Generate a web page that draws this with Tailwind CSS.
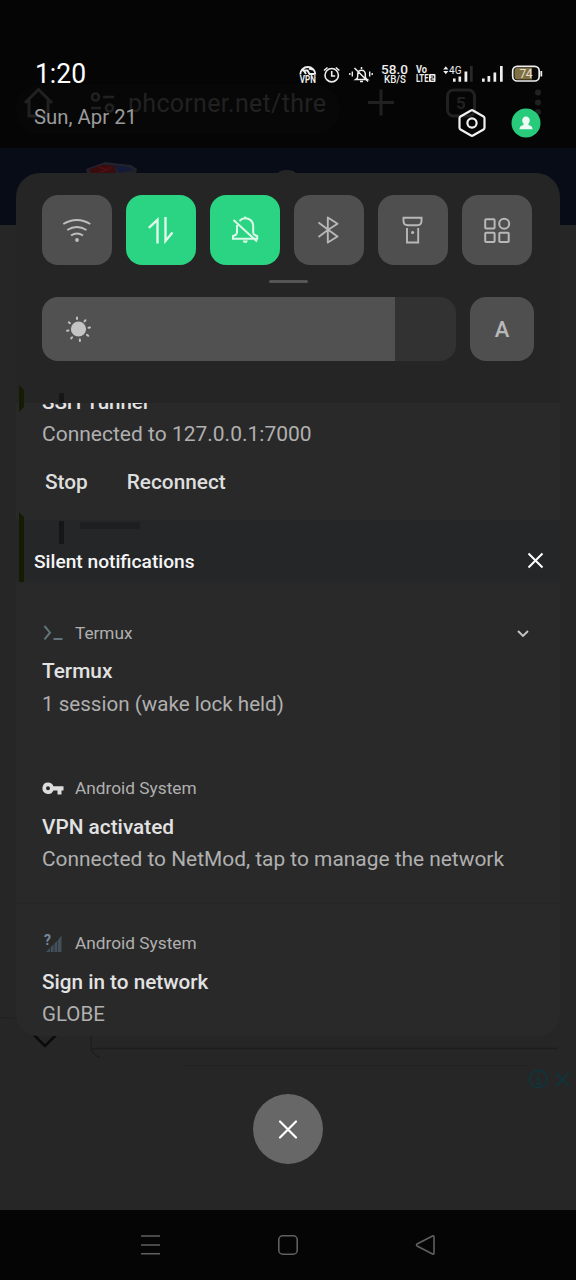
<!DOCTYPE html>
<html lang="en">
<head>
<meta charset="utf-8">
<title>Notification shade</title>
<script src="https://cdn.jsdelivr.net/npm/@tailwindcss/browser@4"></script>
</head>
<body class="bg-black">
<div class="relative w-[576px] h-[1280px] overflow-hidden bg-[#262626] font-['Roboto',sans-serif] text-[#b0b0b0]">

  <!-- dimmed browser page behind the shade -->
  <svg class="absolute inset-0" width="576" height="1280" viewBox="0 0 576 1280" fill="none" aria-hidden="true">
    <rect width="576" height="148" fill="#050505"/>
    <rect y="148" width="576" height="77" fill="#070c16"/>
    <rect x="16" y="84" width="324" height="51" rx="25" fill="#070707"/>
    <path d="M25 103 38.500 89.500 52 103M29 100v16h19v-16" stroke="#212121" stroke-width="3"/>
    <g stroke="#212121" stroke-width="2.600"><circle cx="95.500" cy="97" r="3.500"/><path d="M103 97h11M91 108h10"/><circle cx="109.500" cy="108" r="3.500"/></g>
    <text x="128" y="112" font-size="25" fill="#212121" textLength="198">phcorner.net/thre</text>
    <path d="M368 102.500h26M381 89.500v26" stroke="#212121" stroke-width="3"/>
    <rect x="447.500" y="90" width="27" height="26" rx="6" stroke="#212121" stroke-width="3"/>
    <text x="461" y="109" font-size="17" font-weight="700" text-anchor="middle" fill="#212121">5</text>
    <g fill="#212121"><circle cx="538" cy="92.500" r="3"/><circle cx="538" cy="102.500" r="3"/><circle cx="538" cy="112" r="3"/></g>
    <path d="M86 169l19-7 26 3 6 4-1 5H87z" fill="#22222a"/>
    <path d="M89 169.500l15-5 10 1.500 2 7H91z" fill="#3a0c0e"/><path d="M114 165.500l15 1.500 4 3-14 3z" fill="#151b36"/><path d="M98 167l10 3 3-3M100 172l8-2" stroke="#501014" stroke-width="1.500"/>
    <path d="M278 173q2-3 9-3t9 3z" fill="#252525"/>
    <path d="M0 1018h14q9 0 12 10" stroke="#1e1e1e"/>
    <path d="M34 1035l11 11 11-11" stroke="#0b0b0b" stroke-width="2.500"/>
    <path d="M91 1036v11q1 9 9 10M91 1048.500h466" stroke="#1d1d1d" stroke-width="1.300"/>
    <path d="M184 1065.500h344" stroke="#222"/>
    <g stroke="#0f353b" stroke-width="1.800"><circle cx="538.300" cy="1079" r="8.700"/><path d="M556 1073l13 13M569 1073l-13 13"/><path d="M538.500 1078v6M536 1078.500h3M536 1084h5" /><path d="M537.500 1074h2" stroke-width="2"/></g>
  </svg>

  <div class="relative flex flex-col h-full">
    <!-- status bar and date -->
    <header class="h-[173px] shrink-0 pt-[60px] pl-[34px] pr-[33px]">
      <div class="flex items-center justify-between h-[28px]">
        <span class="pl-px"><svg width="56" height="36" viewBox="0 0 56 36" class="block" aria-label="1:20"><text x="0" y="27" font-size="27" fill="#fff" textLength="51" lengthAdjust="spacingAndGlyphs">1:20</text></svg></span>
        <svg width="246" height="26" viewBox="297 61 246 26" fill="none" stroke="#eee" stroke-width="1.600" class="shrink-0">
          <path d="M300.300 74.500a7.500 7.500 0 0 1 15 0M302.500 70.500h5l2 3.500h5M306 74l-2-3M309 68.500l4 1" stroke-width="1.900"/>
          <text x="307.800" y="82.700" font-size="10" font-weight="700" fill="#eee" stroke="none" text-anchor="middle" textLength="16" lengthAdjust="spacingAndGlyphs">VPN</text>
          <circle cx="331.700" cy="75.200" r="6.700"/><path d="M331.700 71v5h3.500M324 70.500l3.500-3M335.800 67.500l3.500 3"/>
          <path d="M356 79.500q1.700-1 1.700-3v-2.500a3.800 3.800 0 0 1 7.600 0v2.500q0 2 1.700 3zM354.500 68l13.500 13.500M361.500 69v-2M360 81.500h3" stroke-width="1.500"/>
          <path d="M352.300 71.500v5M349.800 73v2M369.700 71.500v5M372.200 73v2" stroke-width="1.400"/>
          <g fill="#eee" stroke="none" font-weight="700">
            <text x="381" y="73.500" font-size="13" font-weight="500" textLength="27" lengthAdjust="spacingAndGlyphs">58.0</text>
            <text x="384" y="83.300" font-size="10.500" font-weight="500" textLength="22" lengthAdjust="spacingAndGlyphs">KB/S</text>
            <text x="416" y="73" font-size="10" textLength="11" lengthAdjust="spacingAndGlyphs">Vo</text>
            <text x="416" y="82" font-size="10.500" textLength="12.500" lengthAdjust="spacingAndGlyphs">LTE</text>
            <rect x="429" y="74" width="6.500" height="8" rx="1"/>
            <path d="M430.800 76h2.800v2h-2.500v2.200h2.800" fill="none" stroke="#111" stroke-width=".9"/>
            <path d="M443.200 69.500l2.600-3.200 2.600 3.200zM443.200 71l2.600 3.200 2.600-3.200z"/>
            <text x="449" y="73.500" font-size="11" font-weight="400" textLength="12.500" lengthAdjust="spacingAndGlyphs">4G</text>
            <path d="M453 78.500h2.600v3.200H453zM458.500 76.500h2.600v5.200h-2.600zM464.500 71.500h2.800v10.200h-2.800zM482 78.500h2.700v3.200H482zM487.500 76h2.700v5.700h-2.700zM493.500 72.500h2.700v9.200h-2.700zM500 66h2.700v15.700H500z"/>
            <path d="M470 66h2.700v15.700H470z" fill="#292929"/>
          </g>
          <rect x="512.700" y="66.300" width="26.500" height="14.700" rx="4.500" fill="#090909" stroke-width="1.700"/>
          <path d="M517.500 67.800h14.500v11.800h-14.500q-3 0-3-3v-5.800q0-3 3-3z" fill="#7f7142" stroke="none"/>
          <path d="M541.300 71v5.500" stroke-width="1.800"/>
          <text x="526" y="78" font-size="12" fill="#e4dfd0" stroke="none" text-anchor="middle" textLength="13">74</text>
        </svg>
      </div>
      <div class="flex justify-between pt-[17px]">
        <svg width="106" height="28" class="block"><text x="0" y="18.700" font-size="20.500" fill="#9b9b9b" textLength="103" lengthAdjust="spacingAndGlyphs">Sun, Apr 21</text></svg>
        <div class="flex gap-[24px] pt-[3px] pr-[2px]">
          <svg width="30" height="30" viewBox="0 0 30 30" fill="none" stroke="#f2f2f2" stroke-width="2.200"><path d="M14 2.500q1-.6 2 0l10.500 6q1 .6 1 1.800v9.400q0 1.200-1 1.800l-10.500 6q-1 .6-2 0l-10.500-6q-1-.6-1-1.800v-9.400q0-1.200 1-1.800z"/><circle cx="15" cy="15" r="4.600"/></svg>
          <svg width="30" height="30" viewBox="0 0 30 30"><circle cx="15" cy="15" r="14.500" fill="#27cb7b"/><path d="M15 8.500a3.800 3.800 0 0 1 3.700 4.700q-.4 2-1.500 2.800.2 1 1.600 1.500 2.700.8 2.700 3.800h-13q0-3 2.700-3.800 1.400-.5 1.600-1.500-1.100-.8-1.500-2.800A3.800 3.800 0 0 1 15 8.500z" fill="#eefaf4"/></svg>
        </div>
      </div>
    </header>

    <!-- quick settings -->
    <section class="h-[230px] shrink-0 mx-4 px-[26px] pt-[22px] rounded-t-[24px] bg-[#252525]">
      <div class="flex gap-[14px]">
        <div class="size-[70px] rounded-[16px] bg-[#4f4f4f] grid place-items-center"><svg width="30" height="30" viewBox="0 0 30 30" fill="none" stroke="#bebebe" stroke-width="1.900"><path d="M1.300 9q13.500-8 27 0M5.200 15q9.700-6 19.300 0M9 20.500q6-4 12 0"/><circle cx="15" cy="25" r="1.900" fill="#bebebe" stroke="none"/></svg></div>
        <div class="size-[70px] rounded-[16px] bg-[#2ad482] grid place-items-center"><svg width="30" height="30" viewBox="0 0 30 30" fill="none" stroke="#dcf9e9" stroke-width="2.400"><path d="M2.800 12.800l8.700-8V28.500M26.500 17.500L19.500 26V2"/></svg></div>
        <div class="size-[70px] rounded-[16px] bg-[#2ad482] grid place-items-center"><svg width="30" height="30" viewBox="0 0 30 30" fill="none" stroke="#dcf9e9" stroke-width="2"><path d="M9.500 6A7.800 7.800 0 0 1 23.200 11v6.500q0 2.500 4 3.500v2.800H3V21q4-1 4-3.500V10M3.500 5l23.500 21.500"/><path d="M15.200 1.500v2"/><path d="M12.700 25.500h5.200q-.5 2.500-2.600 2.500t-2.600-2.500z" fill="#dcf9e9" stroke="none"/></svg></div>
        <div class="size-[70px] rounded-[16px] bg-[#4f4f4f] grid place-items-center"><svg width="30" height="30" viewBox="0 0 30 30" fill="none" stroke="#b8b8b8" stroke-width="1.900" stroke-linejoin="round"><path d="M4.500 7.500l9.300 7 9.700 7-9.700 6V2.500l9.700 6.200-9.700 6.300-9.300 7"/></svg></div>
        <div class="size-[70px] rounded-[16px] bg-[#4f4f4f] grid place-items-center"><svg width="30" height="30" viewBox="0 0 30 30" fill="none" stroke="#b8b8b8" stroke-width="1.900"><path d="M5.500 2.800h18v3q0 4.500-4 4.500h-10q-4 0-4-4.500zM9 13v14.500h11.200V13"/><circle cx="14.600" cy="17.500" r="1.600" fill="#b8b8b8" stroke="none"/></svg></div>
        <div class="size-[70px] rounded-[16px] bg-[#4f4f4f] grid place-items-center"><svg width="30" height="30" viewBox="0 0 30 30" fill="none" stroke="#b8b8b8" stroke-width="2"><rect x="3.200" y="4.200" width="9.400" height="9.200" rx="1"/><circle cx="22.200" cy="8.700" r="5"/><rect x="3.200" y="17.700" width="9.400" height="9.400" rx="1"/><rect x="17.300" y="17.700" width="9.400" height="9.400" rx="1"/></svg></div>
      </div>
      <div class="mx-auto mt-[15px] w-[39px] h-[3px] rounded-full bg-[#555]"></div>
      <div class="flex gap-[14px] mt-[14px]">
        <div class="w-[415px] h-[64px] rounded-[16px] bg-[#323232] overflow-hidden flex">
          <div class="w-[353px] bg-[#515151] flex items-center pl-[22px]">
            <svg width="28" height="28" viewBox="0 0 28 28" fill="none" stroke="#c0c0c0" stroke-width="2" stroke-linecap="round"><circle cx="14.500" cy="14" r="7.600" fill="#c4c4c4" stroke="none"/><path d="M13 2.500v1.500M21.500 5.200l-1 1.200M26 12.500l-1.500.3M24.200 20.800l-1.200-.9M16 26l-.2-1.500M7.200 23.500l.9-1.300M3 15.800l1.500-.3M4.800 7.300L6 8.200"/></svg>
          </div>
        </div>
        <div class="size-[64px] rounded-[16px] bg-[#4f4f4f] grid place-items-center text-[22px] leading-6 pt-px font-medium text-[#b8b8b8]">A</div>
      </div>
    </section>

    <!-- notifications -->
    <main class="h-[633px] shrink-0 mx-4 rounded-b-[22px] bg-[#292929] overflow-hidden">
      <article class="h-[117px] overflow-hidden px-[26px]">
        <h2 class="-mt-[13px] h-6 leading-6 text-[20.500px] font-medium text-[#e2e2e2]">SSH Tunnel</h2>
        <p class="mt-[8px] h-6 leading-6 text-[21px]">Connected to 127.0.0.1:7000</p>
        <div class="mt-[24px] ml-[3px] flex gap-[39px] leading-6 text-[20.800px] font-medium text-[#dedede]"><span>Stop</span><span>Reconnect</span></div>
      </article>
      <div class="h-[65px] bg-linear-to-b from-[#242628] from-85% to-[#272828] pl-[18px] pr-[16px] pt-[17px] flex justify-between items-start">
        <h1 class="text-[19.200px] leading-[52px] h-[50px] -mt-px font-medium text-[#f5f5f5]">Silent notifications</h1>
        <svg class="mt-[15px]" width="17" height="17" viewBox="0 0 17 17" stroke="#fff" stroke-width="2"><path d="M1.500 1.500l14 14M15.500 1.500l-14 14"/></svg>
      </div>
      <article class="h-[162px] px-[26px] pt-[37px]">
        <div class="flex items-center h-6 text-[17.200px]"><svg class="mr-[11px]" width="22" height="22" viewBox="0 0 22 22" fill="none" stroke="#5f7479" stroke-width="2"><path d="M2.500 3l5.500 6.700-5.500 6.700M11.500 16h9"/></svg><span>Termux</span>
          <svg class="ml-auto mr-[4px]" width="14" height="14" viewBox="0 0 14 14" fill="none" stroke="#c6c6c6" stroke-width="1.900"><path d="M2 4l5 5 5-5"/></svg></div>
        <h2 class="mt-[13px] h-6 leading-6 text-[20.800px] font-medium text-[#e2e2e2]">Termux</h2>
        <p class="mt-[9px] h-6 leading-6 text-[20.600px]">1 session (wake lock held)</p>
      </article>
      <article class="h-[155px] px-[26px] pt-[30px]">
        <div class="flex items-center h-6 text-[17.300px]"><svg class="mr-[11px]" width="22" height="22" viewBox="0 0 22 22"><path fill="#ddd" fill-rule="evenodd" d="M6 4.500a5.700 5.700 0 0 1 5.400 3.700H21.500v4.200h-2v4h-4v-4h-4.100A5.700 5.700 0 1 1 6 4.500zm0 3.700a2 2 0 1 0 0 4 2 2 0 0 0 0-4z"/></svg><span>Android System</span></div>
        <h2 class="mt-[14px] h-6 leading-6 text-[20.800px] font-medium text-[#e2e2e2]">VPN activated</h2>
        <p class="mt-[8px] h-6 leading-6 text-[20.900px]">Connected to NetMod, tap to manage the network</p>
      </article>
      <article class="h-[134px] px-[26px] pt-[30px]">
        <div class="flex items-center h-6 text-[17.300px]"><svg class="mr-[11px]" width="22" height="22" viewBox="0 0 22 22"><path fill="#43505b" d="M4 19l4-4v4zM8.700 14.300l3-3V19h-3zM12.400 10.600l3-3V19h-3zM16 7l3.500-4.500V19H16z"/><text x="2" y="12" font-size="14" font-weight="700" fill="#75899a">?</text></svg><span>Android System</span></div>
        <h2 class="mt-[14px] h-6 leading-6 text-[20.700px] font-medium text-[#e2e2e2]">Sign in to network</h2>
        <p class="mt-[8px] h-6 leading-6 text-[20.500px]">GLOBE</p>
      </article>
    </main>

    <div class="flex-1 pt-[58px] flex justify-center items-start">
      <div class="size-[70px] rounded-full bg-[#676767] grid place-items-center"><svg width="22" height="22" viewBox="0 0 22 22" stroke="#fff" stroke-width="2.200" stroke-linecap="round"><path d="M3 3.500l16 16M19 3.500l-16 16"/></svg></div>
    </div>

    <nav class="h-[70px] shrink-0 bg-[#050505] flex justify-center items-center gap-[115px]">
      <svg width="22" height="22" viewBox="0 0 22 22" stroke="#606060" stroke-width="1.600"><path d="M1 2h19M1 11h19M1 19.700h19"/></svg>
      <svg width="22" height="22" viewBox="0 0 22 22" fill="none" stroke="#606060" stroke-width="1.600"><rect x="1.800" y="1.800" width="18.400" height="18.400" rx="4"/></svg>
      <svg width="22" height="22" viewBox="0 0 22 22" fill="none" stroke="#606060" stroke-width="1.600" stroke-linejoin="round"><path d="M3 10q-1 1 0 2l15.500 8q1.500.5 1.500-1V3q0-1.500-1.500-1z"/></svg>
    </nav>
  </div>

  <!-- page details that show faintly through the shade -->
  <svg class="absolute inset-0 pointer-events-none" width="576" height="1280" fill="none" aria-hidden="true">
    <path d="M19 385l5 5v17l-5 5zM19 512l5 5v65h-5z" fill="#151c04"/>
    <path d="M59 393h5v10h-5zM59 521h5v23h-5z" fill="#151618"/>
    <rect x="80" y="522" width="60" height="7" fill="#1e1f20"/>
    <path d="M16 903.500h544M15.500 615v120M15.500 752v270M560.500 615v120M560.500 752v270" stroke="#262626"/>
  </svg>
</div>
</body>
</html>
